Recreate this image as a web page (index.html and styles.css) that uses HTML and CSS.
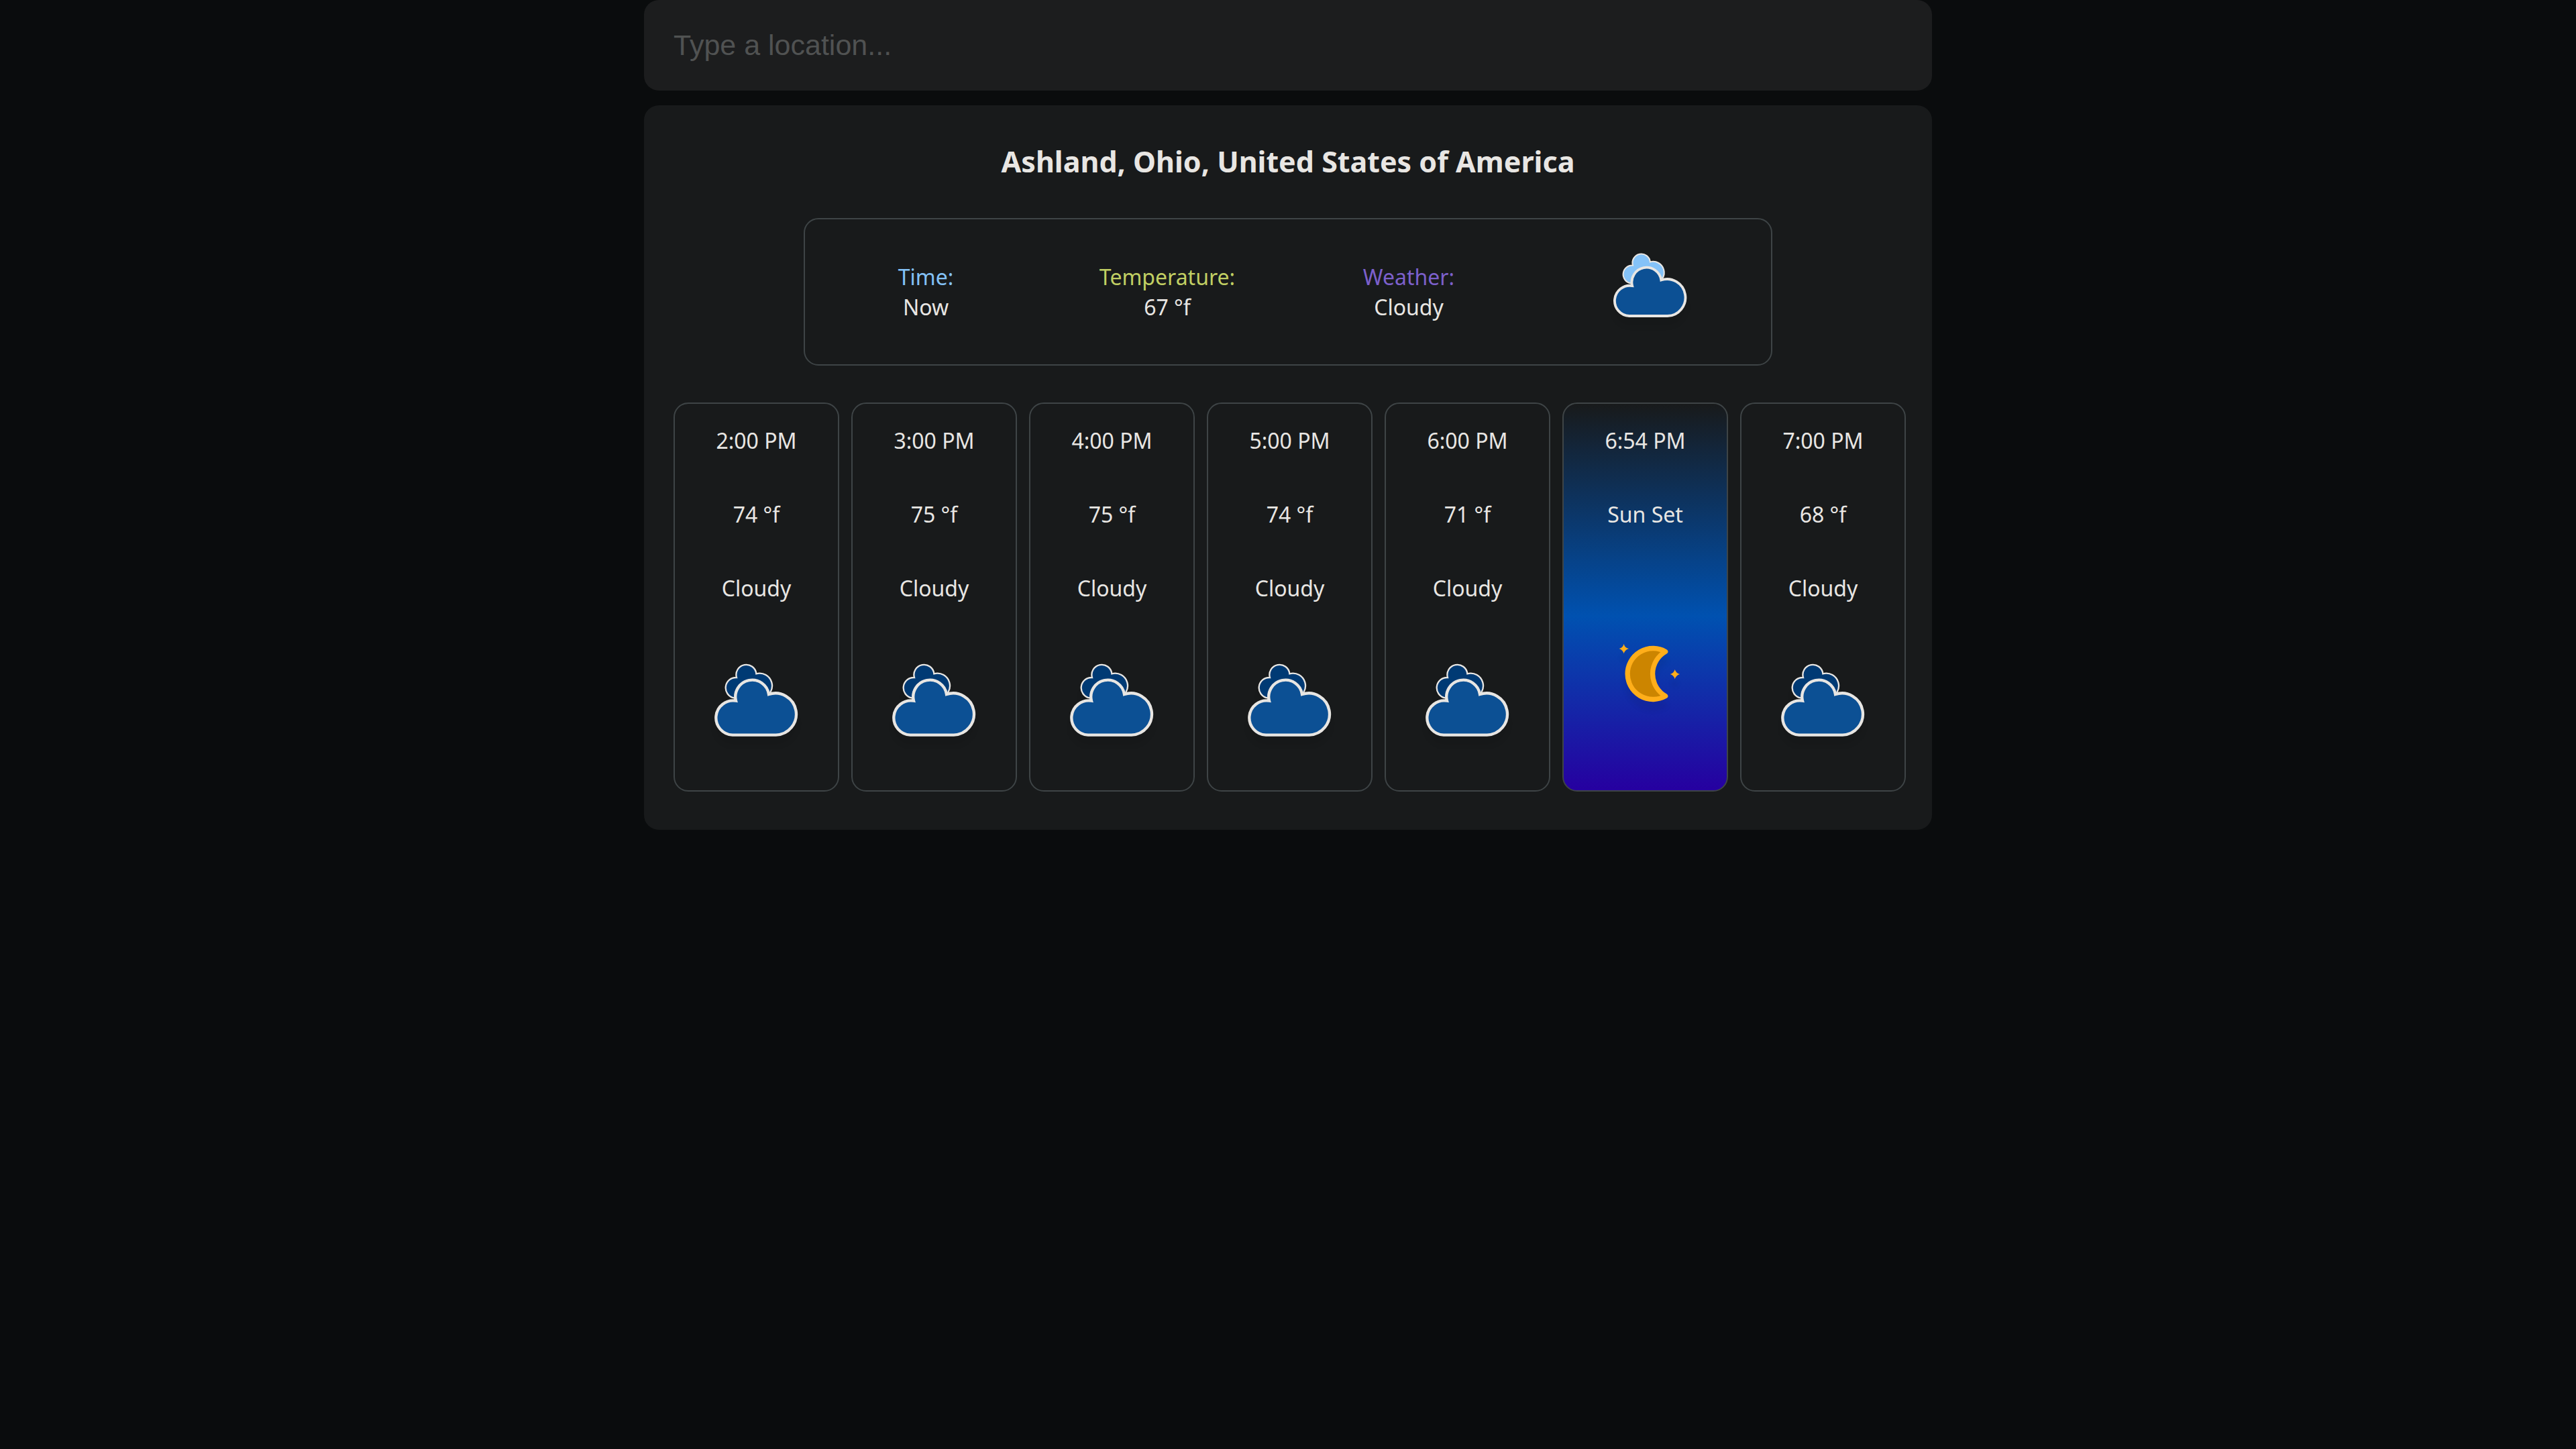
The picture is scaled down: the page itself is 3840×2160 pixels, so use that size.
FILE: index.html
```html
<!DOCTYPE html>
<html lang="en">
<head>
<meta charset="utf-8">
<meta name="viewport" content="width=device-width, initial-scale=1">
<title>Weather</title>
<link rel="stylesheet" href="styles.css">
</head>
<body>
<svg class="sprite" aria-hidden="true">
  <symbol id="cloud" viewBox="42 36 381 339">
    <path class="cloud-back" d="M132 196A46 46 0 0 1 144 105A45 45 0 1 1 232 88A55 55 0 1 1 262 196Z"/>
    <path class="cloud-front" d="M126 362A77 77 0 1 1 141 209A75 75 0 1 1 288 180A93.4 93.4 0 1 1 320 362Z"/>
  </symbol>
  <symbol id="moon" viewBox="30 86 315 264">
    <path class="moon-body" d="M278 123A114 114 0 1 0 278 322A115 115 0 0 1 278 123Z"/>
    <path class="star" d="M92 89Q96 106 114 110Q96 115 92 132Q87 115 71 110Q87 106 92 89Z"/>
    <path class="star" d="M320 203Q325 219 342 224Q325 229 320 246Q316 229 299 224Q316 219 320 203Z"/>
  </symbol>
</svg>
<main class="app">
  <input class="search" type="text" placeholder="Type a location..." aria-label="Location">
  <section class="panel">
    <h1 class="place">Ashland, Ohio, United States of America</h1>
    <div class="now">
      <div class="fact"><span class="label time">Time:</span><span>Now</span></div>
      <div class="fact"><span class="label temperature">Temperature:</span><span>67 °f</span></div>
      <div class="fact"><span class="label weather">Weather:</span><span>Cloudy</span></div>
      <div class="fact"><svg class="now-icon"><use href="#cloud"/></svg></div>
    </div>
    <div class="hours">
      <article class="hour"><p>2:00 PM</p><p>74 °f</p><p>Cloudy</p><svg class="hour-icon"><use href="#cloud"/></svg></article>
      <article class="hour"><p>3:00 PM</p><p>75 °f</p><p>Cloudy</p><svg class="hour-icon"><use href="#cloud"/></svg></article>
      <article class="hour"><p>4:00 PM</p><p>75 °f</p><p>Cloudy</p><svg class="hour-icon"><use href="#cloud"/></svg></article>
      <article class="hour"><p>5:00 PM</p><p>74 °f</p><p>Cloudy</p><svg class="hour-icon"><use href="#cloud"/></svg></article>
      <article class="hour"><p>6:00 PM</p><p>71 °f</p><p>Cloudy</p><svg class="hour-icon"><use href="#cloud"/></svg></article>
      <article class="hour sunset"><p>6:54 PM</p><p>Sun Set</p><svg class="moon-icon"><use href="#moon"/></svg></article>
      <article class="hour"><p>7:00 PM</p><p>68 °f</p><p>Cloudy</p><svg class="hour-icon"><use href="#cloud"/></svg></article>
    </div>
  </section>
</main>
</body>
</html>
```
FILE: styles.css
```css
* {
  box-sizing: border-box;
}

body {
  margin: 0;
  background: #0a0c0d;
  color: #e8e6e3;
  font-family: "Noto Sans", sans-serif;
  font-size: 32px;
  line-height: 45px;
}

.sprite {
  display: none;
}

.app {
  display: flex;
  flex-direction: column;
  gap: 22px;
  width: 50%;
  margin: 0 auto;
}

.search {
  width: 100%;
  padding: 42px 44px;
  border: 0;
  border-radius: 22px;
  outline: 0;
  background: #1c1d1e;
  color: inherit;
  font-family: "Liberation Sans", Arial, sans-serif;
  font-size: 43px;
  line-height: 51px;
}

.search::placeholder {
  color: #505252;
  opacity: 1;
}

.panel {
  padding: 54px 0 57px;
  border-radius: 22px;
  background: #181a1b;
}

.place {
  margin: 0 0 54px;
  font-size: 43px;
  line-height: 60px;
  text-align: center;
}

.now {
  display: grid;
  grid-template-columns: repeat(4, 1fr);
  align-items: center;
  box-sizing: content-box;
  width: 75%;
  min-height: 216px;
  margin: 0 auto 55px;
  border: 2px solid #3e4446;
  border-radius: 22px;
}

.fact {
  display: flex;
  flex-direction: column;
  align-items: center;
}

.time {
  color: #84c2f8;
}

.temperature {
  color: #c1cf63;
}

.weather {
  color: #7c60cc;
}

.hours {
  display: grid;
  grid-template-columns: repeat(7, 1fr);
  gap: 18px;
  padding: 0 39px 0 44px;
}

.hour {
  display: flex;
  flex-direction: column;
  align-items: center;
  gap: 65px;
  padding: 32px 0 78px;
  border: 2px solid #3e4446;
  border-radius: 22px;
}

.hour p {
  margin: 0;
}

.sunset {
  background: linear-gradient(#181a1b, #0051b0 55%, #2600a0);
}

.now-icon,
.hour-icon,
.moon-icon {
  filter: drop-shadow(0 14px 3px rgba(0, 0, 0, 0.05));
}

.now-icon {
  width: 112px;
  height: 100px;
  margin-bottom: 20px;
  --back: #84c2f8;
}

.hour-icon {
  width: 127px;
  height: 113px;
  margin-top: 23px;
  --back: #003a74;
}

.moon-icon {
  width: 105px;
  height: 88px;
  margin-top: 105px;
}

.cloud-back {
  fill: var(--back);
  stroke: #e8e6e3;
  stroke-width: 7;
}

.cloud-front {
  fill: #0c5094;
  stroke: #e8e6e3;
  stroke-width: 13;
}

.moon-body {
  fill: #cc8500;
  stroke: #ffae1a;
  stroke-width: 22;
  stroke-linejoin: round;
}

.star {
  fill: #ffae1a;
}
```
